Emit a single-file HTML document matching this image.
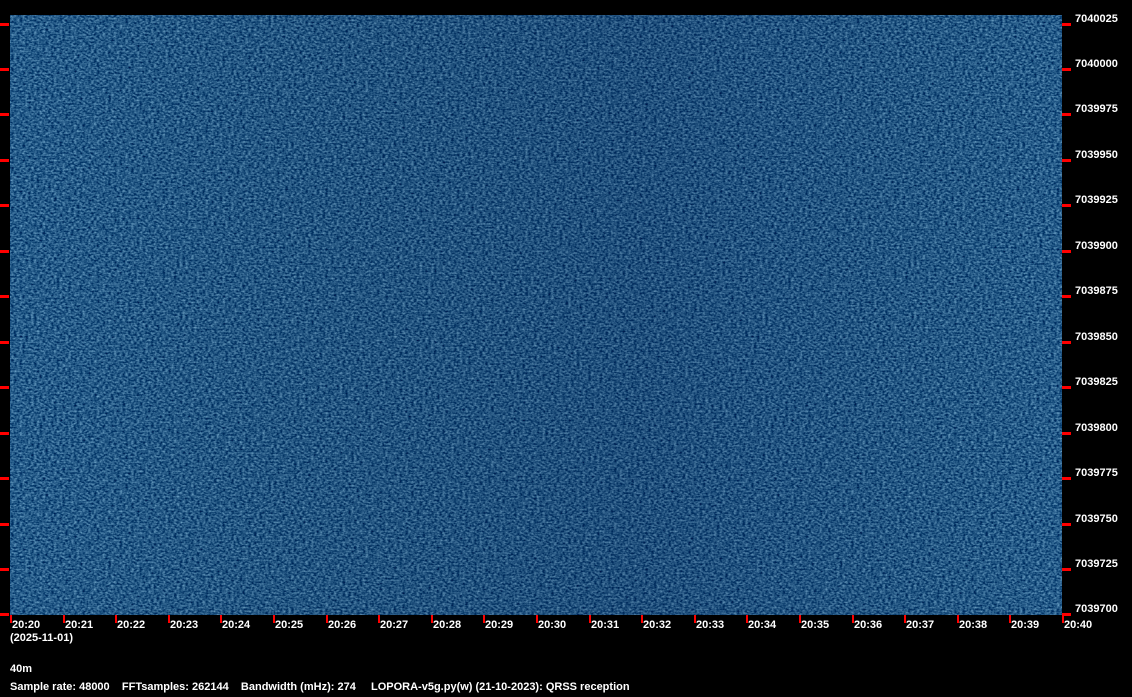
<!DOCTYPE html>
<html><head><meta charset="utf-8"><style>
body{margin:0;background:#000;width:1132px;height:697px;overflow:hidden;position:relative;font-family:"Liberation Sans",sans-serif;font-weight:bold;font-size:11px;color:#fff}
.t{position:absolute;white-space:nowrap;line-height:12px}
svg{position:absolute;left:0;top:0}
</style></head><body>
<svg width="1132" height="697">
<defs>
<filter id="n" x="0" y="0" width="100%" height="100%" color-interpolation-filters="sRGB">
<feTurbulence type="fractalNoise" baseFrequency="0.35 0.55" numOctaves="2" seed="3"/>
<feColorMatrix type="matrix" values="0.75 0 0 0 -0.23  0.75 0 0 0 -0.02  0.65 0 0 0 0.21  0 0 0 0 1"/>
</filter>
<linearGradient id="g" x1="0" x2="1" y1="0" y2="0">
<stop offset="0" stop-color="#000" stop-opacity="0"/>
<stop offset="0.6" stop-color="#000a30" stop-opacity="0.15"/>
<stop offset="0.72" stop-color="#000a30" stop-opacity="0.1"/>
<stop offset="1" stop-color="#000" stop-opacity="0"/>
</linearGradient>
</defs>
<rect x="10" y="15" width="1052" height="600" fill="#1d4f80"/>
<rect x="10" y="15" width="1052" height="600" filter="url(#n)"/>
<rect x="10" y="15" width="1052" height="600" fill="url(#g)"/>
<g fill="#f00" id="ticks"></g>
</svg>
<div id="labels"></div>
<div class="t" style="left:10px;top:632px">(2025-11-01)</div>
<div class="t" style="left:10px;top:663px">40m</div>
<div class="t" style="left:10px;top:681px">Sample rate: 48000&nbsp;&nbsp;&nbsp;&nbsp;FFTsamples: 262144&nbsp;&nbsp;&nbsp;&nbsp;Bandwidth (mHz): 274</div>
<div class="t" style="left:371px;top:681px">LOPORA-v5g.py(w) (21-10-2023): QRSS reception</div>
<script>
var g=document.getElementById('ticks'),L=document.getElementById('labels'),s='';
var ns='http://www.w3.org/2000/svg';
function r(x,y,w,h){var e=document.createElementNS(ns,'rect');e.setAttribute('x',x);e.setAttribute('y',y);e.setAttribute('width',w);e.setAttribute('height',h);g.appendChild(e);}
for(var i=0;i<14;i++){var y=Math.round(22.5+i*45.46);r(0,y,9,3);r(1062,y,9,3);
var f=7040025-i*25;s+='<div class="t" style="left:1075px;top:'+(y-10)+'px">'+f+'</div>';}
for(var i=0;i<21;i++){var x=Math.round(10+i*52.6);r(x,615,2,8);
var lab='20:'+(20+i);
s+='<div class="t" style="left:'+(x+2)+'px;top:619px">'+lab+'</div>';}
L.innerHTML=s;
</script>
</body></html>
